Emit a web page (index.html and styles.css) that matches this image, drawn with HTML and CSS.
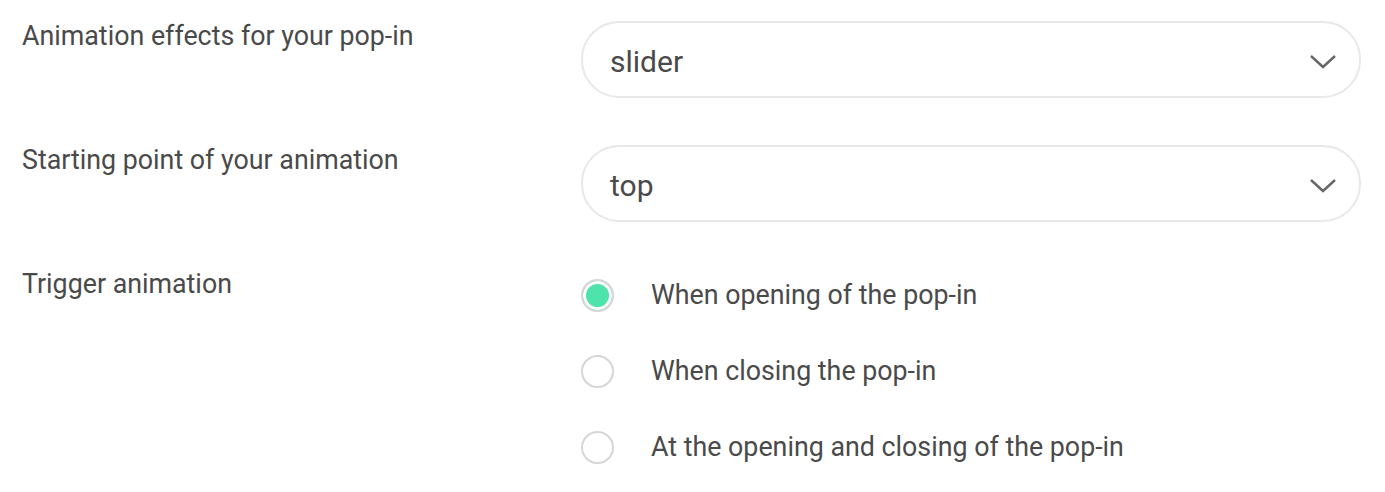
FILE: index.html
```html
<!DOCTYPE html>
<html>
<head>
  <title>Pop-in animation</title>
  <link rel="stylesheet" href="styles.css">
</head>
<body>

  <div class="form">
    <div class="row">
      <label class="label">Animation effects for your pop-in</label>
      <div class="select">
        <span>slider</span>
        <svg class="chevron" width="28" height="16" viewBox="0 0 28 16"><path d="M2 2 L14 13 L26 2" fill="none" stroke="#666" stroke-width="2.4"/></svg>
      </div>
    </div>

    <div class="row">
      <label class="label">Starting point of your animation</label>
      <div class="select">
        <span>top</span>
        <svg class="chevron" width="28" height="16" viewBox="0 0 28 16"><path d="M2 2 L14 13 L26 2" fill="none" stroke="#666" stroke-width="2.4"/></svg>
      </div>
    </div>

    <div class="row">
      <label class="label">Trigger animation</label>
      <div class="radios">
        <div class="radio-item">
          <span class="radio checked"></span>
          <span>When opening of the pop-in</span>
        </div>
        <div class="radio-item">
          <span class="radio"></span>
          <span>When closing the pop-in</span>
        </div>
        <div class="radio-item">
          <span class="radio"></span>
          <span>At the opening and closing of the pop-in</span>
        </div>
      </div>
    </div>
  </div>

</body>
</html>
```

FILE: styles.css
```css
body {
  margin: 0;
  background: #fff;
  font-family: Roboto, "Liberation Sans", sans-serif;
  color: #4a4a4a;
}

.form {
  display: flex;
  flex-direction: column;
  gap: 47px;
  padding: 21px 24px 0 22px;
}

.row {
  display: grid;
  grid-template-columns: 559px 1fr;
  align-items: start;
}

.label {
  font-size: 26.8px;
  line-height: 30px;
}

.select {
  height: 77px;
  box-sizing: border-box;
  border: 2px solid #e8e8e8;
  border-radius: 38px;
  display: flex;
  align-items: center;
  justify-content: space-between;
  padding: 0 22px 0 27px;
  font-size: 30px;
}

.select span {
  margin-top: 3px;
}

.chevron {
  display: block;
  margin-top: 4px;
}

.radios {
  display: flex;
  flex-direction: column;
  gap: 24px;
}

.radio-item {
  height: 52px;
  display: flex;
  align-items: center;
  gap: 37px;
  font-size: 26.8px;
}

.radio {
  width: 33px;
  height: 33px;
  box-sizing: border-box;
  border: 2px solid #d6d6d6;
  border-radius: 50%;
  flex-shrink: 0;
}

.radio.checked {
  background: #4de3ab;
  box-shadow: inset 0 0 0 3px #fff;
}
```
